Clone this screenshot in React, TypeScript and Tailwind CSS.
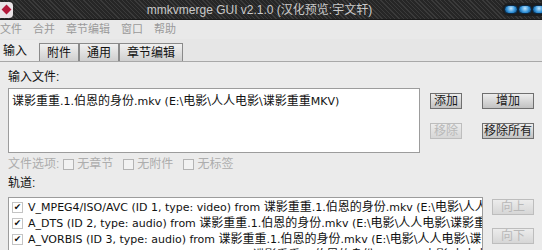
import React from 'react';

const menus = ['文件', '合并', '章节编辑', '窗口', '帮助'];
const tabs = ['附件', '通用', '章节编辑'];
const tracks = [
  'V_MPEG4/ISO/AVC (ID 1, type: video) from 谍影重重.1.伯恩的身份.mkv (E:\\电影\\人人电影',
  'A_DTS (ID 2, type: audio) from 谍影重重.1.伯恩的身份.mkv (E:\\电影\\人人电影\\谍影重重',
  'A_VORBIS (ID 3, type: audio) from 谍影重重.1.伯恩的身份.mkv (E:\\电影\\人人电影\\谍影',
  'S_TEXT/UTF8 (ID 4, type: subtitles) from 谍影重重.1.伯恩的身份.mkv (E:\\电影\\人人电影',
];

// latin in 11px DejaVu (tahoma-ish width), chinese runs a bit bigger
const Mixed = ({ text }: { text: string }) => (
  <>
    {text.split(/([\u4e00-\u9fff]+)/).map((part, i) =>
      /[\u4e00-\u9fff]/.test(part) ? (
        <span key={i} className="text-[12px] font-['Noto_Sans_CJK_SC',sans-serif]">
          {part}
        </span>
      ) : (
        <span key={i}>{part}</span>
      )
    )}
  </>
);

const Btn = ({ label, disabled, w }: { label: string; disabled?: boolean; w: string }) => (
  <div
    className={`${w} h-[16px] flex items-center justify-center text-[12px] leading-none border ${
      disabled
        ? 'border-[#bdbdbd] text-[#b8b8b8] bg-[linear-gradient(#ececec,#d6d6d6)]'
        : 'border-[#6f6f6f] text-[#1a1a1a] bg-[linear-gradient(#ededed,#c2c2c2)]'
    }`}
  >
    {label}
  </div>
);

const Pill = () => (
  <div className="w-[14px] h-[9px] rounded-full bg-[radial-gradient(circle_at_50%_35%,#bfe6ff,#2f8fd6_55%,#0c3b66)] border border-[#0a2a48]" />
);

export default function App() {
  return (
    <div className="w-[542px] h-[250px] overflow-hidden bg-[#ebebeb] font-['Liberation_Sans','Noto_Sans_CJK_SC',sans-serif] text-[#111]">
      {/* title bar */}
      <div className="h-[20px] flex items-center bg-[#303030] bg-[repeating-linear-gradient(45deg,#3a3a3a_0px,#3a3a3a_1px,#262626_1px,#262626_3px)] border-b border-[#1a1a1a]">
        <div className="w-[13px] h-[16px] bg-[#e9e3e6] rounded-r-[4px] flex items-center justify-center">
          <div className="w-[7px] h-[7px] bg-[#b3183a] rotate-45" />
        </div>
        <div className="flex-1 text-center text-[12px] text-[#c9c9c9] pl-[4px]">mmkvmerge GUI v2.1.0 (汉化预览:宇文轩)</div>
        <div className="flex items-center mr-[-6px] p-[2px] rounded-full bg-[#1d1d1d]">
          <Pill />
          <Pill />
          <Pill />
        </div>
      </div>

      {/* menu bar */}
      <div className="h-[19px] flex items-center gap-[11px] text-[11px] text-[#9a9a9a] bg-[#e9e9e9]">
        {menus.map((m) => (
          <span key={m}>{m}</span>
        ))}
      </div>

      {/* tabs */}
      <div className="h-[23px] flex items-end border-b border-[#a8a8a8] bg-[#e6e6e6]">
        <div className="w-[39px] h-[21px] pl-[3px] flex items-center text-[12px] bg-[#ebebeb]">输入</div>
        {tabs.map((t) => (
          <div
            key={t}
            className="h-[18px] px-[7px] flex items-center text-[12px] border border-b-0 border-[#8a8a8a] bg-[linear-gradient(#f0f0f0,#cfcfcf)] min-w-[40px] justify-center"
          >
            {t}
          </div>
        ))}
      </div>

      <div className="px-[8px]">
        <div className="pt-[8px] h-[26px] text-[12px] leading-[14px]">输入文件:</div>
        <div className="flex">
          <div className="w-[416px] h-[65px] bg-white border border-[#9c9c9c] pl-[3px] pt-[4px] text-[11px] leading-[14px] font-['DejaVu_Sans','Noto_Sans_CJK_SC',sans-serif]">
            <Mixed text="谍影重重.1.伯恩的身份.mkv (E:\电影\人人电影\谍影重重MKV)" />
          </div>
          <div className="ml-[10px] pt-[5px] grid grid-cols-[32px_52px] gap-x-[20px] gap-y-[14px] h-fit">
            <Btn label="添加" w="w-[32px]" />
            <Btn label="增加" w="w-[52px]" />
            <Btn label="移除" w="w-[32px]" disabled />
            <Btn label="移除所有" w="w-[52px]" />
          </div>
        </div>

        <div className="h-[22px] flex items-center text-[12px] text-[#adadad]">
          <span>文件选项:</span>
          {['无章节', '无附件', '无标签'].map((o) => (
            <span key={o} className="flex items-center ml-[4px] mr-[6px]">
              <span className="w-[11px] h-[11px] border border-[#b4b4b4] bg-[#f2f2f2] mr-[3px]" />
              {o}
            </span>
          ))}
        </div>

        <div className="h-[16px] flex items-center text-[12px]">轨道:</div>

        <div className="flex mt-[6px]">
          <div className="w-[480px] h-[80px] bg-white border border-[#9c9c9c] pt-[1px] overflow-hidden text-[11px] font-['DejaVu_Sans','Noto_Sans_CJK_SC',sans-serif]">
            {tracks.map((t) => (
              <div key={t} className="h-[16px] flex items-center whitespace-nowrap pl-[3px]">
                <span className="w-[11px] h-[11px] border border-[#c4c4c4] mr-[5px] flex items-center justify-center text-[9px] leading-none shrink-0">
                  ✔
                </span>
                <span>
                  <Mixed text={t} />
                </span>
              </div>
            ))}
          </div>
          <div className="ml-[9px] pt-[2px] flex flex-col gap-[13px]">
            <Btn label="向上" w="w-[42px]" disabled />
            <Btn label="向下" w="w-[42px]" disabled />
          </div>
        </div>
      </div>
    </div>
  );
}
